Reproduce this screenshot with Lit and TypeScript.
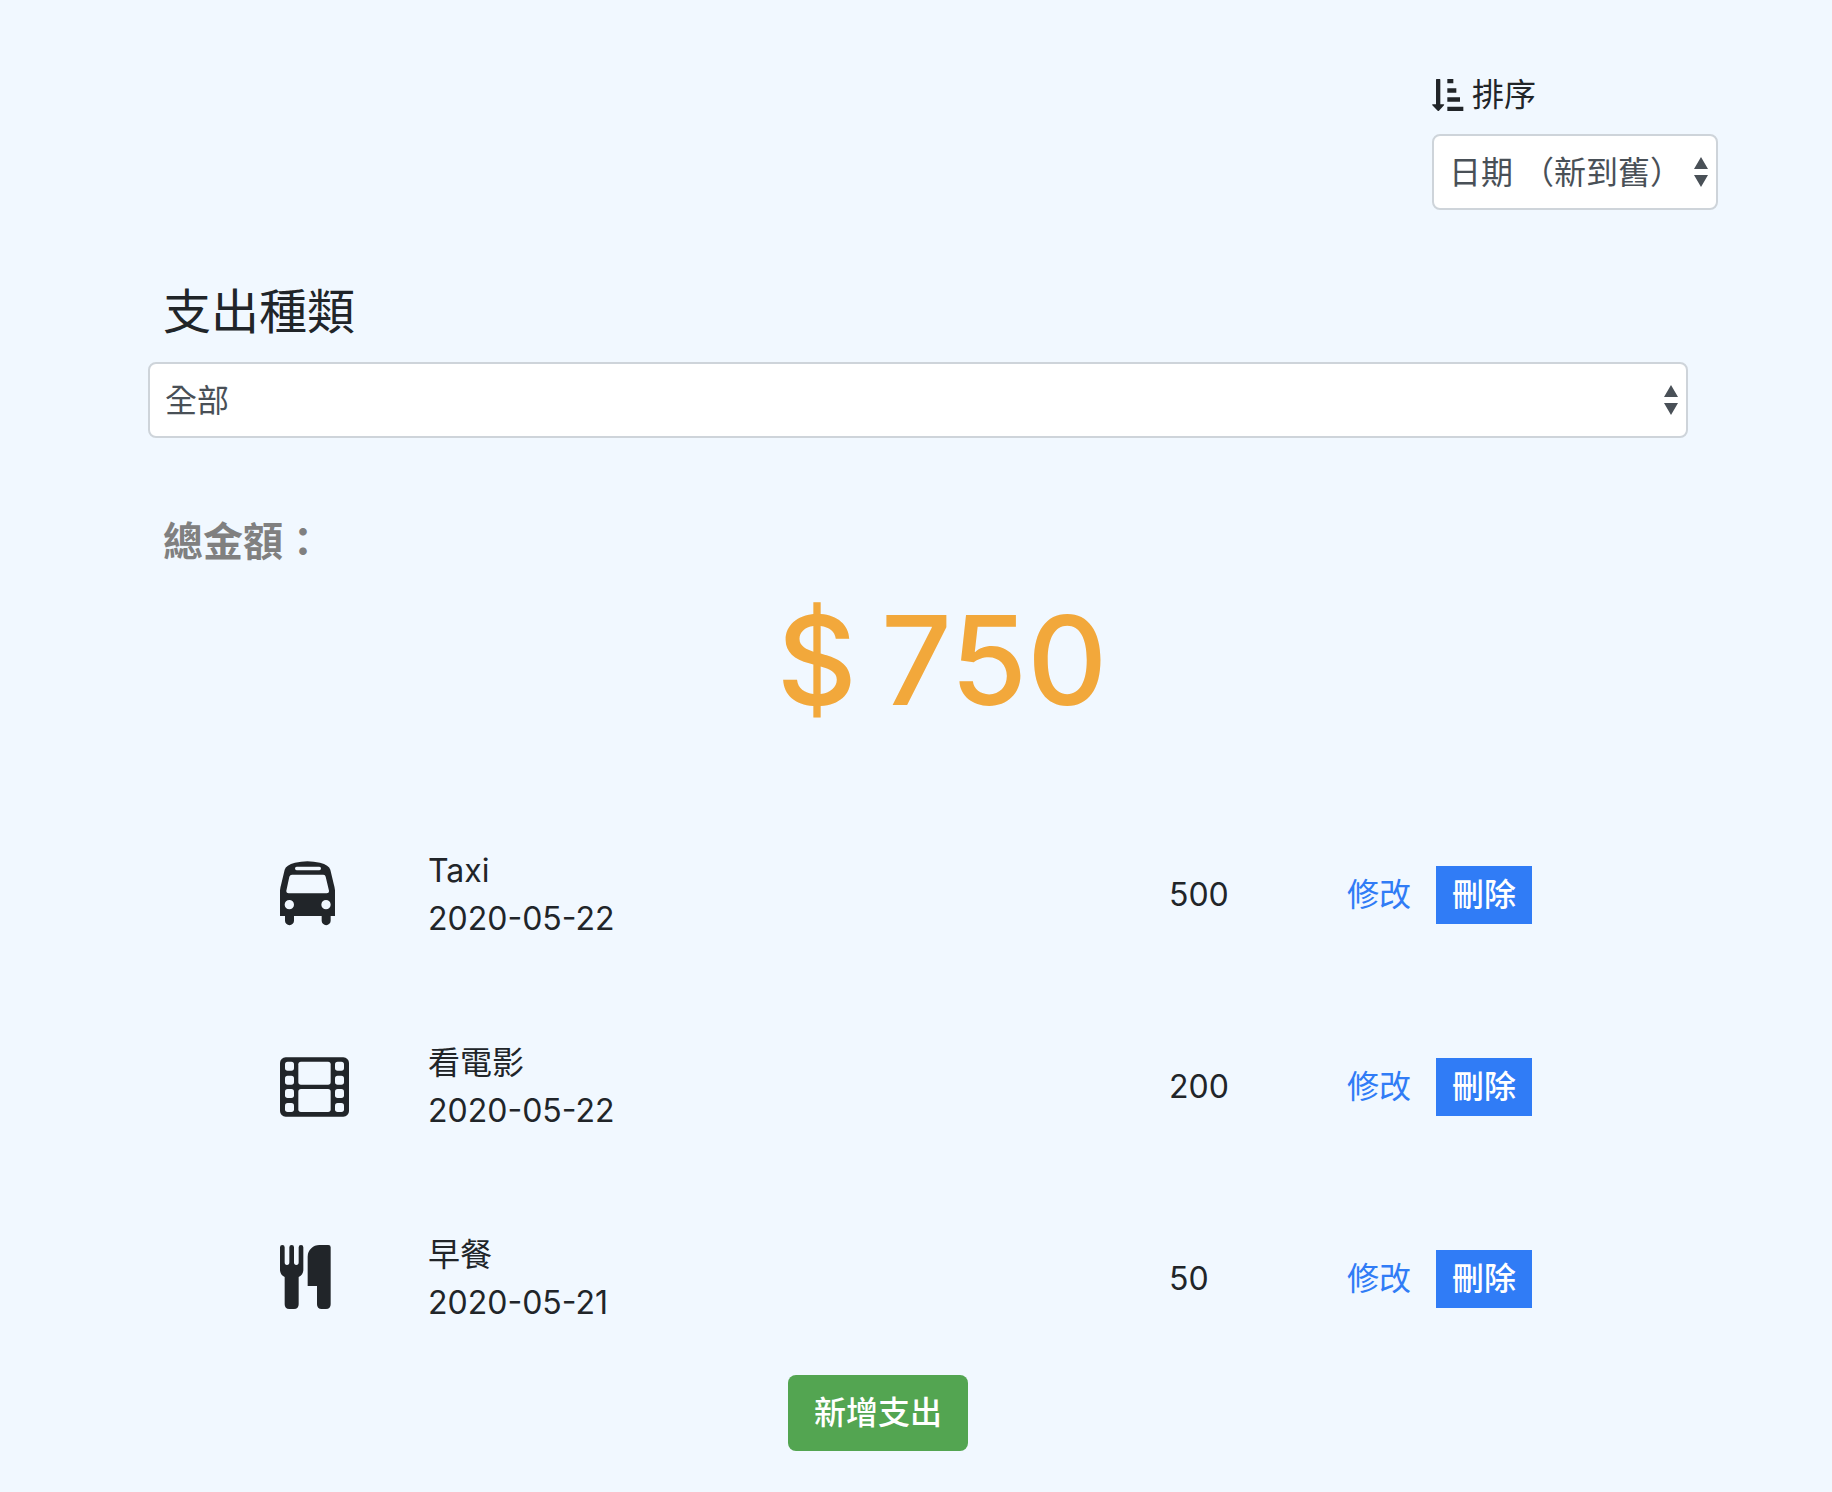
import { LitElement, html, svg, css } from "lit";
import { customElement, property, state } from "lit/decorators.js";

type Category = "traffic" | "entertainment" | "food";

interface Expense {
  name: string;
  date: string;
  amount: number;
  category: Category;
}

const icons = {
  traffic: svg`
    <path fill-rule="evenodd" d="M0 165V88Q1 78 4 68L14 26Q18 12 45 5Q82 -4 120 5Q147 12 151 26L161 68Q164 78 165 88V165H152V179A13 13 0 0 1 125 179V165H42V179A13 13 0 0 1 15 179V165Z
      M50 17H118Q123 17 123 22Q123 28 118 28H50Q45 28 45 22Q45 17 50 17Z
      M36 41H130Q136 41 137 47L147 89Q148 97 140 97H26Q18 97 19 89L28 47Q30 41 36 41Z
      M14 131A14 14 0 1 0 42 131A14 14 0 1 0 14 131Z
      M124 131A14 14 0 1 0 152 131A14 14 0 1 0 124 131Z"/>`,
  entertainment: svg`
    <rect y="13" width="207" height="178" rx="17"/>
    <g class="hole">
      ${[15, 165].map((x) =>
        [26, 68, 108, 150].map(
          (y) => svg`<rect x=${x} y=${y} width="27" height="27" rx="8"/>`
        )
      )}
      <rect x="55" y="26" width="97" height="69" rx="8"/>
      <rect x="55" y="108" width="97" height="69" rx="8"/>
    </g>`,
  food: svg`
    <path d="M0 7Q0 0 7 0Q14 0 14 7V52Q14 60 21 60Q28 60 28 52V7Q28 0 35 0Q42 0 42 7V52Q42 60 49 60Q56 60 56 52V7Q56 0 63 0Q70 0 70 7V74Q70 90 56 96V178Q56 192 42 192H28Q14 192 14 178V96Q0 90 0 74Z"/>
    <path d="M83 35Q83 20 94 10Q104 0 118 0H145Q152 0 152 7V178Q152 192 138 192H125Q111 192 111 178V123H83Z"/>`,
};

const shared = css`
  * {
    box-sizing: border-box;
  }
  .field {
    position: relative;
    display: block;
  }
  .select {
    display: block;
    width: 100%;
    height: 76px;
    padding: 2px 32px 0 15px;
    border: 2px solid #ced4da;
    border-radius: 8px;
    background: #fff;
    color: #495057;
    font: inherit;
    appearance: none;
  }
  .arrows {
    position: absolute;
    top: 23px;
    right: 10px;
    width: 14px;
    height: 30px;
    fill: #495057;
    pointer-events: none;
  }
`;

const arrows = html`<svg class="arrows" viewBox="0 0 14 30" aria-hidden="true">
  <path d="M7 0L14 12H0ZM0 18H14L7 30Z" />
</svg>`;

@customElement("expense-row")
export class ExpenseRow extends LitElement {
  @property({ attribute: false }) expense!: Expense;

  static styles = [
    shared,
    css`
      :host {
        display: grid;
        grid-template-columns: 148px 1fr 178px auto;
        align-items: center;
        padding: 48px 0;
      }
      .icon {
        width: 72px;
        height: 68px;
        fill: #212529;
      }
      .hole {
        fill: #f1f8ff;
      }
      .actions {
        display: flex;
        align-items: center;
        gap: 25px;
      }
      .edit {
        color: #307cf6;
        text-decoration: none;
      }
      .remove {
        height: 58px;
        padding: 0 16px;
        border: 0;
        background: #307cf6;
        color: #fff;
        font: inherit;
        font-weight: 500;
        line-height: 48px;
      }
    `,
  ];

  render() {
    const { name, date, amount, category } = this.expense;
    return html`
      <svg class="icon" viewBox="0 0 216 204" aria-hidden="true">${icons[category]}</svg>
      <div>
        <div>${name}</div>
        <time datetime=${date}>${date}</time>
      </div>
      <div>${amount}</div>
      <div class="actions">
        <a class="edit" href="#edit">修改</a>
        <button
          class="remove"
          type="button"
          @click=${() => this.dispatchEvent(new CustomEvent("remove"))}
        >
          刪除
        </button>
      </div>
    `;
  }
}

@customElement("app-root")
export class AppRoot extends LitElement {
  @state() private expenses: Expense[] = [
    { name: "Taxi", date: "2020-05-22", amount: 500, category: "traffic" },
    { name: "看電影", date: "2020-05-22", amount: 200, category: "entertainment" },
    { name: "早餐", date: "2020-05-21", amount: 50, category: "food" },
  ];

  static styles = [
    shared,
    css`
      :host {
        display: block;
        min-height: 100vh;
        background: #f1f8ff;
        color: #212529;
        font-family: Inter, "Noto Sans CJK TC", sans-serif;
        font-size: 32px;
        line-height: 48px;
      }
      .page {
        padding: 71px 114px 42px 148px;
      }
      .sort {
        width: 286px;
        margin-left: auto;
      }
      .sort-label {
        display: flex;
        align-items: center;
        gap: 8px;
        margin-bottom: 15px;
      }
      .sort-icon {
        width: 32px;
        height: 32px;
        fill: #212529;
      }
      .filter {
        margin: 72px 30px 0 0;
      }
      .filter-label {
        display: block;
        margin-bottom: 20px;
        padding-left: 15px;
        font-size: 48px;
        line-height: 60px;
      }
      .total-label {
        margin: 80px 0 0 15px;
        color: #808080;
        font-size: 40px;
        font-weight: 700;
        line-height: 48px;
      }
      .total {
        display: flex;
        justify-content: center;
        gap: 24px;
        margin: 14px 0 0 18px;
        color: #f2a83b;
        font-size: 124px;
        font-weight: 500;
        line-height: 160px;
      }
      .list {
        margin: 59px 186px 0 132px;
        padding: 0;
        list-style: none;
      }
      .footer {
        display: flex;
        justify-content: center;
        padding-right: 110px;
      }
      .add {
        height: 76px;
        padding: 0 26px;
        border: 0;
        border-radius: 8px;
        background: #53a551;
        color: #fff;
        font: inherit;
        font-weight: 500;
      }
    `,
  ];

  private remove(expense: Expense) {
    this.expenses = this.expenses.filter((e) => e !== expense);
  }

  render() {
    const total = this.expenses.reduce((sum, e) => sum + e.amount, 0);
    return html`
      <main class="page">
        <div class="sort">
          <label class="sort-label" for="sort">
            <svg class="sort-icon" viewBox="0 0 96 96" aria-hidden="true">
              <path d="M12 2Q12 0 14 0H23Q25 0 25 2V76H35Q38 76 36 79L21 95Q19 97 17 95L1 79Q-1 76 2 76H12ZM46 0H64V13H46ZM46 28H73V41H46ZM46 55H84V68H46ZM46 83H94V96H46Z" />
            </svg>
            <span>排序</span>
          </label>
          <div class="field">
            <select class="select" id="sort">
              <option>日期 （新到舊）</option>
            </select>
            ${arrows}
          </div>
        </div>

        <div class="filter">
          <label class="filter-label" for="category">支出種類</label>
          <div class="field">
            <select class="select" id="category">
              <option>全部</option>
            </select>
            ${arrows}
          </div>
        </div>

        <div class="total-label">總金額：</div>
        <div class="total"><span>$</span><span>${total}</span></div>

        <ul class="list">
          ${this.expenses.map(
            (e) => html`<li>
              <expense-row .expense=${e} @remove=${() => this.remove(e)}></expense-row>
            </li>`
          )}
        </ul>

        <div class="footer">
          <button class="add" type="button">新增支出</button>
        </div>
      </main>
    `;
  }
}
